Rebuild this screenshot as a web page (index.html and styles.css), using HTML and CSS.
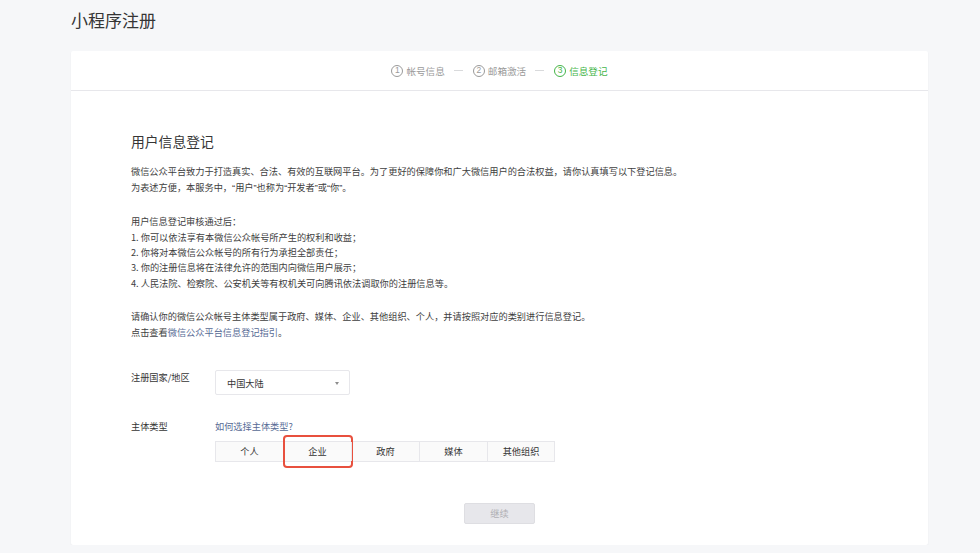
FILE: index.html
```html
<!DOCTYPE html>
<html lang="zh-CN">
<head>
<meta charset="utf-8">
<title>小程序注册</title>
<link rel="stylesheet" href="styles.css">
</head>
<body>
<div class="page">
  <h1 class="title">小程序注册</h1>
  <div class="card">
    <div class="card-head">
      <div class="steps">
        <span class="step"><span class="num">1</span>帐号信息</span>
        <span class="sep"></span>
        <span class="step"><span class="num">2</span>邮箱激活</span>
        <span class="sep"></span>
        <span class="step active"><span class="num">3</span>信息登记</span>
      </div>
    </div>
    <div class="card-body">
      <h2 class="sub">用户信息登记</h2>
      <p class="para">微信公众平台致力于打造真实、合法、有效的互联网平台。为了更好的保障你和广大微信用户的合法权益，请你认真填写以下登记信息。<br>为表述方便，本服务中，<span class="q">“</span>用户<span class="q">”</span>也称为<span class="q">“</span>开发者<span class="q">”</span>或<span class="q">“</span>你<span class="q">”</span>。</p>
      <p class="para">用户信息登记审核通过后：<br>1. 你可以依法享有本微信公众帐号所产生的权利和收益；<br>2. 你将对本微信公众帐号的所有行为承担全部责任；<br>3. 你的注册信息将在法律允许的范围内向微信用户展示；<br>4. 人民法院、检察院、公安机关等有权机关可向腾讯依法调取你的注册信息等。</p>
      <p class="para">请确认你的微信公众帐号主体类型属于政府、媒体、企业、其他组织、个人，并请按照对应的类别进行信息登记。<br>点击查看<a class="link">微信公众平台信息登记指引</a>。</p>

      <div class="form-row first">
        <div class="label">注册国家/地区</div>
        <div class="select"><span>中国大陆</span><span class="caret"></span></div>
      </div>
      <div class="form-row second">
        <div class="label">主体类型</div>
        <div class="field">
          <a class="link help">如何选择主体类型?</a>
          <div class="segments">
            <span class="seg">个人</span>
            <span class="seg marked">企业<span class="mark"></span></span>
            <span class="seg">政府</span>
            <span class="seg">媒体</span>
            <span class="seg">其他组织</span>
          </div>
        </div>
      </div>
      <div class="actions">
        <span class="btn">继续</span>
      </div>
    </div>
  </div>
</div>
</body>
</html>
```
FILE: styles.css
```css
html, body {
  margin: 0;
  padding: 0;
  background: #f6f7f9;
}
body {
  font-family: "Noto Sans CJK SC", "Noto Sans", "Liberation Sans", sans-serif;
  color: #353535;
}
.page {
  margin-left: 71px;
  width: 857px;
}
.title {
  margin: 0 0 11px;
  height: 40px;
  line-height: 40px;
  font-size: 17px;
  font-weight: 400;
  color: #353535;
}
.card {
  background: #fff;
  border-radius: 2px;
  box-shadow: 0 1px 2px rgba(0, 0, 0, 0.06);
}
.card-head {
  height: 39px;
  border-bottom: 1px solid #e7e7eb;
  display: flex;
  align-items: center;
  justify-content: center;
}
.steps {
  display: flex;
  align-items: center;
  font-size: 9.6px;
  color: #9a9a9a;
}
.step {
  display: inline-flex;
  align-items: center;
}
.num {
  display: inline-flex;
  align-items: center;
  justify-content: center;
  width: 10px;
  height: 10px;
  border: 1px solid currentColor;
  border-radius: 50%;
  font-size: 8.5px;
  line-height: 1;
  margin-right: 3px;
  font-family: "Liberation Sans", sans-serif;
}
.step.active {
  color: #44b549;
}
.sep {
  width: 9px;
  height: 1px;
  background: #d9dadc;
  margin: 0 10px 0 9px;
}
.card-body {
  padding: 40px 60px 21px;
}
.sub {
  margin: 0;
  font-size: 13.8px;
  line-height: 20px;
  font-weight: 400;
  color: #353535;
}
.para {
  margin: 13.3px 0 0;
  font-size: 9.2px;
  line-height: 15.3px;
  color: #3e3e3e;
}
.para + .para {
  margin-top: 18.5px;
}
.q {
  font-family: "Liberation Sans", sans-serif;
}
.link {
  color: #576b95;
  text-decoration: none;
}
.form-row {
  display: flex;
  align-items: flex-start;
  font-size: 9.2px;
  line-height: 15px;
}
.form-row.first {
  margin-top: 30px;
}
.form-row.second {
  margin-top: 24.5px;
}
.label {
  width: 84px;
  flex: none;
}
.form-row.first .label {
  padding-top: 0.5px;
}
.select {
  box-sizing: border-box;
  width: 135px;
  height: 25px;
  border: 1px solid #e7e7eb;
  border-radius: 2px;
  padding: 3px 10px 0 11px;
  display: flex;
  align-items: center;
  justify-content: space-between;
}
.caret {
  width: 0;
  height: 0;
  border-left: 2.5px solid transparent;
  border-right: 2.5px solid transparent;
  border-top: 3px solid #8d8d8d;
}
.field {
  display: flex;
  flex-direction: column;
  align-items: flex-start;
}
.help {
  line-height: 15px;
}
.segments {
  display: flex;
  margin-top: 7px;
  border: 1px solid #e7e7eb;
  background: #fafafa;
}
.seg {
  position: relative;
  box-sizing: border-box;
  width: 68px;
  height: 19px;
  display: flex;
  align-items: center;
  justify-content: center;
  border-left: 1px solid #e7e7eb;
  color: #353535;
}
.seg:first-child {
  border-left: none;
  width: 67px;
}
.seg:last-child {
  width: 67px;
}
.mark {
  position: absolute;
  left: -1px;
  top: -7px;
  width: 70px;
  height: 33px;
  box-sizing: border-box;
  border: 2px solid #e8503e;
  border-radius: 4px;
}
.actions {
  display: flex;
  justify-content: center;
  margin-top: 40.5px;
}
.btn {
  box-sizing: border-box;
  width: 71px;
  height: 21px;
  display: flex;
  align-items: center;
  justify-content: center;
  background: #e7e7eb;
  border: 1px solid #dedee2;
  border-radius: 2px;
  font-size: 9.2px;
  color: #b0b0b4;
}
```
